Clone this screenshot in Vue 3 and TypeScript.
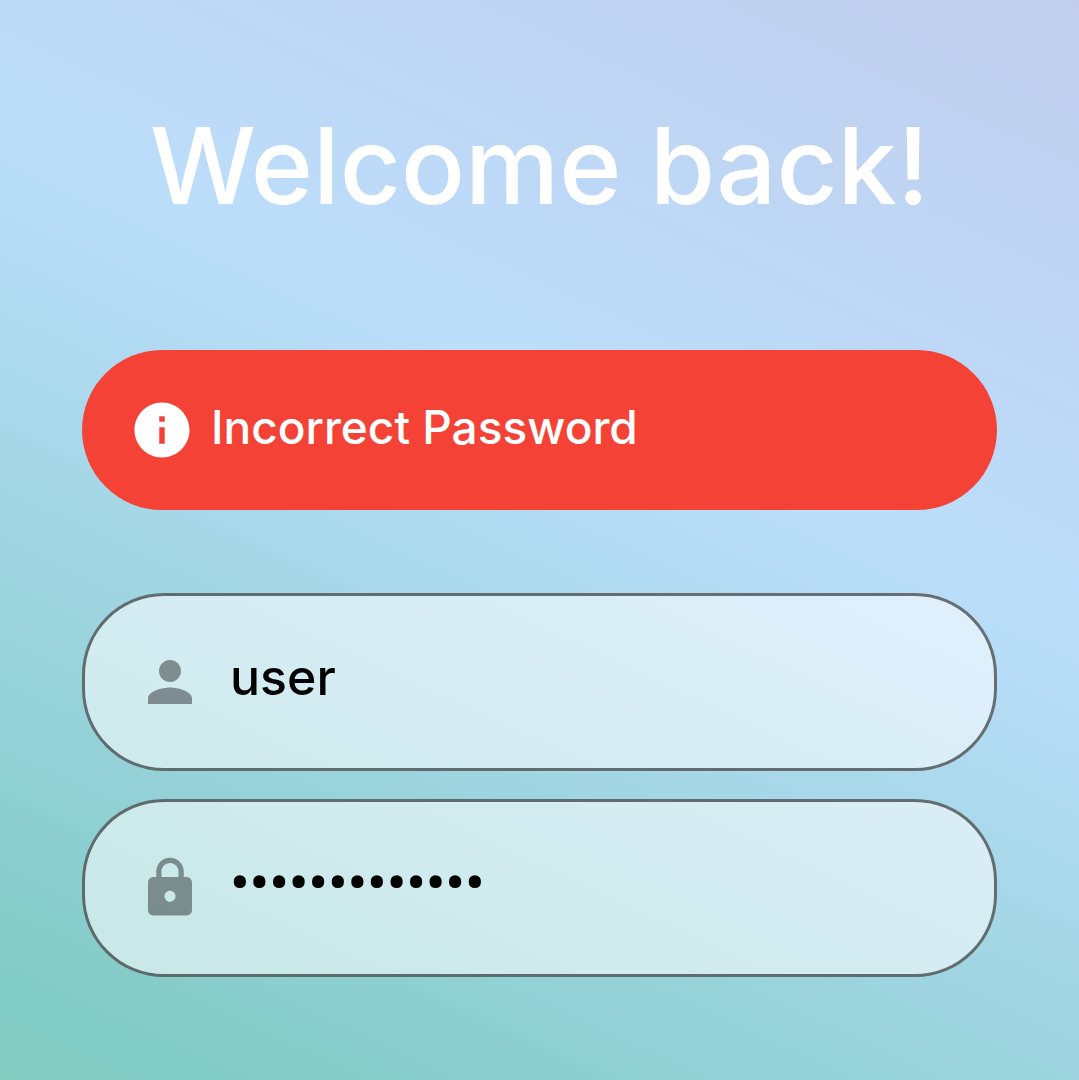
<script setup lang="ts">
import { ref } from 'vue'

const error = ref<string>('Incorrect Password')
const username = ref<string>('user')
const password = ref<string>('passwordpassw')
</script>

<template>
  <main class="login">
    <h1 class="title">Welcome back!</h1>
    <form class="form" @submit.prevent>
      <div v-if="error" class="alert" role="alert">
        <svg class="icon" viewBox="0 0 24 24" aria-hidden="true">
          <path d="M12 2C6.48 2 2 6.48 2 12s4.48 10 10 10 10-4.48 10-10S17.52 2 12 2zm1 15h-2v-6h2v6zm0-8h-2V7h2v2z" />
        </svg>
        <span>{{ error }}</span>
      </div>
      <label class="field">
        <svg class="icon" viewBox="0 0 24 24" aria-hidden="true">
          <path d="M12 12c2.21 0 4-1.79 4-4s-1.79-4-4-4-4 1.79-4 4 1.79 4 4 4zm0 2c-2.67 0-8 1.34-8 4v2h16v-2c0-2.66-5.33-4-8-4z" />
        </svg>
        <input v-model="username" type="text" aria-label="Username" autocomplete="username" />
      </label>
      <label class="field">
        <svg class="icon" viewBox="0 0 24 24" aria-hidden="true">
          <path d="M18 8h-1V6c0-2.76-2.24-5-5-5S7 3.24 7 6v2H6c-1.1 0-2 .9-2 2v10c0 1.1.9 2 2 2h12c1.1 0 2-.9 2-2V10c0-1.1-.9-2-2-2zm-6 9c-1.1 0-2-.9-2-2s.9-2 2-2 2 .9 2 2-.9 2-2 2zm3.1-9H8.9V6c0-1.71 1.39-3.1 3.1-3.1s3.1 1.39 3.1 3.1v2z" />
        </svg>
        <input v-model="password" type="password" aria-label="Password" autocomplete="current-password" />
      </label>
    </form>
  </main>
</template>

<style>
body {
  margin: 0;
}
</style>

<style scoped>
.login {
  box-sizing: border-box;
  min-height: 100vh;
  padding: 96px 82px;
  background: linear-gradient(205deg, #c2cded 0%, #bbdefb 40%, #80cbc4 95%, #84ccc0 100%);
  font-family: Inter, "Liberation Sans", sans-serif;
  font-weight: 500;
}

.title {
  margin: 0 0 114px;
  color: #fff;
  font-size: 106px;
  font-weight: 500;
  line-height: 140px;
  text-align: center;
  white-space: nowrap;
}

.form {
  display: flex;
  flex-direction: column;
  gap: 28px;
}

.alert {
  display: flex;
  align-items: center;
  gap: 16px;
  box-sizing: border-box;
  min-height: 160px;
  margin-bottom: 55px;
  padding: 0 47px;
  border-radius: 80px;
  background: #f44336;
  color: #fff;
  font-size: 46px;
  line-height: 64px;
}

.alert span {
  padding-bottom: 6px;
}

.icon {
  flex: none;
  width: 66px;
  height: 66px;
  fill: currentColor;
}

.field {
  display: flex;
  align-items: center;
  gap: 27px;
  box-sizing: border-box;
  height: 178px;
  padding: 0 52px;
  border: 3px solid rgba(0, 0, 0, 0.54);
  border-radius: 82px;
  background: rgba(255, 255, 255, 0.55);
}

.field .icon {
  color: rgba(0, 0, 0, 0.4);
}

.field input {
  flex: 1;
  min-width: 0;
  height: 72px;
  padding: 0 0 10px;
  border: 0;
  outline: 0;
  background: transparent;
  color: #000;
  font: inherit;
  font-size: 50px;
}

.field input[type="password"] {
  font-family: Roboto, sans-serif;
  font-size: 56px;
}
</style>
